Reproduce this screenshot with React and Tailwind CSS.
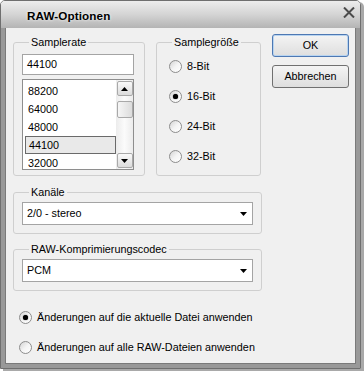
import React from "react";

function Radio({ checked }) {
  return (
    <span className="relative flex h-[13px] w-[13px] shrink-0 items-center justify-center rounded-full border border-[#8d8d8d] bg-gradient-to-br from-[#d4d4d4] via-[#f4f4f4] to-white">
      {checked && <span className="h-[5px] w-[5px] rounded-full bg-black shadow-[0_0_1px_#000]" />}
    </span>
  );
}

function Arrow({ up }) {
  return (
    <svg width="7" height="4" viewBox="0 0 7 4" className="block">
      {up ? <polygon points="0,4 7,4 3.5,0" fill="#000" /> : <polygon points="0,0 7,0 3.5,4" fill="#000" />}
    </svg>
  );
}

function Group({ label, className, legendClass = "ml-[7px]", children }) {
  return (
    <fieldset className={"rounded-[3px] border border-[#cfcfcf] " + className}>
      <legend className={"px-[2px] text-[10.8px] leading-[13px] " + legendClass}>{label}</legend>
      {children}
    </fieldset>
  );
}

function Combo({ value }) {
  return (
    <div className="flex h-[23px] w-[231px] items-center justify-between border border-[#a4a4a4] bg-white pl-[4px] pr-[5px] text-[10.8px]">
      <span>{value}</span>
      <Arrow />
    </div>
  );
}

function ScrollBtn({ children, className = "" }) {
  return (
    <div className={"flex h-[15px] w-[16px] items-center justify-center rounded-[2px] border border-[#a9a9a9] bg-gradient-to-b from-[#fafafa] to-[#dcdcdc] " + className}>
      {children}
    </div>
  );
}

export default function App() {
  const items = ["88200", "64000", "48000", "44100", "32000"];
  return (
    <div className="h-[371px] w-[364px] bg-white font-['Liberation_Sans',Arial,sans-serif] text-black">
      <div className="flex h-[369px] w-[361px] flex-col overflow-hidden rounded-t-[5px] border border-[#6f6f6f] shadow-[3px_2px_0_#a9a9a9]">
        {/* title bar */}
        <div className="flex h-[27px] shrink-0 items-center justify-between bg-gradient-to-b from-[#ededed] via-[#d4d4d4] to-[#b4b4b4] pl-[26px] pr-[5px]">
          <span className="pt-[3px] text-[11.7px] font-bold tracking-[0.1px] [text-shadow:0_0_3px_#fff]">RAW-Optionen</span>
          <svg width="12" height="11" viewBox="0 0 12 11" className="mb-[4px]">
            <path d="M1 0.5 L11 10.5 M11 0.5 L1 10.5" stroke="#4b4b4b" strokeWidth="2" />
          </svg>
        </div>
        {/* body */}
        <div className="flex-1 border-x-[4px] border-b-[4px] border-[#999999]">
          <div className="flex h-full flex-col border-x border-b border-[#7a7a7a] bg-[#f0f0f0] pl-[7px] pt-[6px]">
            <div className="flex items-start">
              <div className="flex w-[248px] flex-col pt-[2px]">
                <div className="flex gap-[11px]">
                  <Group label="Samplerate" className="w-[132px] px-[8px] pb-[5px]">
                    <div className="mt-[5px] flex h-[21px] w-[112px] items-center border border-[#a4a4a4] bg-white pl-[4px] text-[10.8px]">44100</div>
                    <div className="mt-[4px] flex h-[91px] w-[112px] overflow-hidden border border-[#8e8e8e] bg-white">
                      <div className="flex flex-1 flex-col pl-[2px] pt-[2px]">
                        {items.map((v) => (
                          <div
                            key={v}
                            className={
                              "flex h-[18px] w-[91px] shrink-0 items-center pl-[3px] text-[10.8px] " +
                              (v === "44100" ? "border border-[#6a6a6a] bg-[#e9e9e9] pl-[2px]" : "")
                            }
                          >
                            {v}
                          </div>
                        ))}
                      </div>
                      <div className="flex w-[17px] flex-col items-center bg-gradient-to-r from-[#ececec] via-[#fbfbfb] to-[#ececec] pt-[1px]">
                        <ScrollBtn><Arrow up /></ScrollBtn>
                        <div className="mt-[5px] h-[17px] w-[16px] rounded-[2px] border border-[#a9a9a9] bg-gradient-to-r from-[#f6f6f6] to-[#dcdcdc]" />
                        <div className="flex-1" />
                        <ScrollBtn className="mb-[1px]"><Arrow /></ScrollBtn>
                      </div>
                    </div>
                  </Group>
                  <Group label="Samplegröße" legendClass="ml-[3px]" className="w-[105px] pl-[12px] pt-[2px]">
                    {["8-Bit", "16-Bit", "24-Bit", "32-Bit"].map((b) => (
                      <div key={b} className="flex h-[30px] items-center gap-[5px] text-[10.8px]">
                        <Radio checked={b === "16-Bit"} />
                        <span>{b}</span>
                      </div>
                    ))}
                  </Group>
                </div>
                <Group label="Kanäle" className="mt-[10px] px-[8px] pb-[8px]">
                  <div className="mt-[3px]">
                    <Combo value="2/0 - stereo" />
                  </div>
                </Group>
                <Group label="RAW-Komprimierungscodec" className="mt-[9px] px-[8px] pb-[8px]">
                  <div className="mt-[3px]">
                    <Combo value="PCM" />
                  </div>
                </Group>
              </div>
              <div className="ml-[11px] flex flex-col gap-[8px]">
                <button className="flex h-[23px] w-[77px] items-center justify-center rounded-[3px] border border-[#4d78b3] bg-gradient-to-b from-[#f4f4f4] to-[#dedede] text-[10.8px] shadow-[inset_0_0_0_1px_#b8d4f0]">
                  OK
                </button>
                <button className="flex h-[23px] w-[77px] items-center justify-center rounded-[3px] border border-[#707070] bg-gradient-to-b from-[#f4f4f4] to-[#dedede] text-[10.8px]">
                  Abbrechen
                </button>
              </div>
            </div>
            <div className="mt-[16px] flex flex-col gap-[10px] pl-[6px]">
              <div className="flex h-[20px] items-center gap-[5px] text-[10.8px]">
                <Radio checked />
                <span>Änderungen auf die aktuelle Datei anwenden</span>
              </div>
              <div className="flex h-[20px] items-center gap-[5px] text-[10.8px]">
                <Radio />
                <span>Änderungen auf alle RAW-Dateien anwenden</span>
              </div>
            </div>
          </div>
        </div>
      </div>
    </div>
  );
}
